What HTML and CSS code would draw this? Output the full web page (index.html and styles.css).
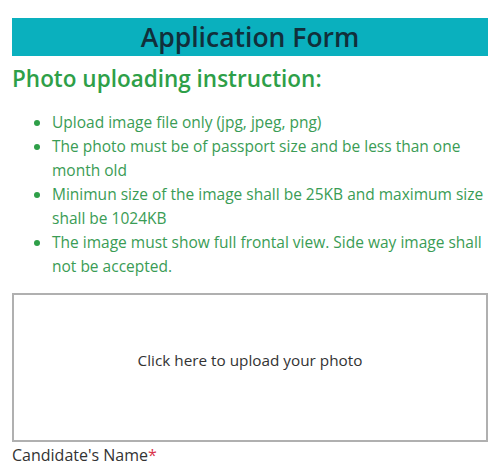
FILE: index.html
```html
<!DOCTYPE html>
<html>
<head>
<meta charset="utf-8">
<link rel="stylesheet" href="styles.css">
</head>
<body>
<div class="page">
  <h1 class="title">Application Form</h1>
  <h2 class="subtitle">Photo uploading instruction:</h2>
  <ul class="rules">
    <li>Upload image file only (jpg, jpeg, png)</li>
    <li>The photo must be of passport size and be less than one month old</li>
    <li>Minimun size of the image shall be 25KB and maximum size shall be 1024KB</li>
    <li>The image must show full frontal view. Side way image shall not be accepted.</li>
  </ul>
  <div class="upload">Click here to upload your photo</div>
  <label class="field-label">Candidate's Name<span class="req">*</span></label>
</div>
</body>
</html>
```

FILE: styles.css
```css
html, body {
  margin: 0;
  padding: 0;
  background: #ffffff;
}
body {
  font-family: "Open Sans", "Noto Sans", sans-serif;
  color: #333;
}
.page {
  padding: 18px 8px 0 12px;
  width: 476px;
}
.title {
  margin: 0;
  background: #0ab0be;
  color: #112f3b;
  text-align: center;
  font-size: 26.5px;
  font-weight: 600;
  height: 38px;
  line-height: 39px;
}
.subtitle {
  margin: 8px 0 0 0;
  color: #2e9f48;
  font-size: 22.5px;
  font-weight: 600;
  line-height: 30px;
}
.rules {
  margin: 16px 0 0 0;
  padding-left: 40px;
  color: #3a9c55;
  font-size: 15.5px;
  line-height: 24px;
}
.rules li::marker {
  color: #2e9f48;
}
.upload {
  margin-top: 15px;
  border: 2px solid #b0b0b0;
  display: flex;
  align-items: center;
  justify-content: center;
  padding-bottom: 16px;
  box-sizing: border-box;
  height: 149px;
  font-size: 15.3px;
  color: #333;
}
.field-label {
  display: block;
  font-size: 16px;
  line-height: 26px;
  color: #333;
}
.req {
  color: #d9344a;
}
```
